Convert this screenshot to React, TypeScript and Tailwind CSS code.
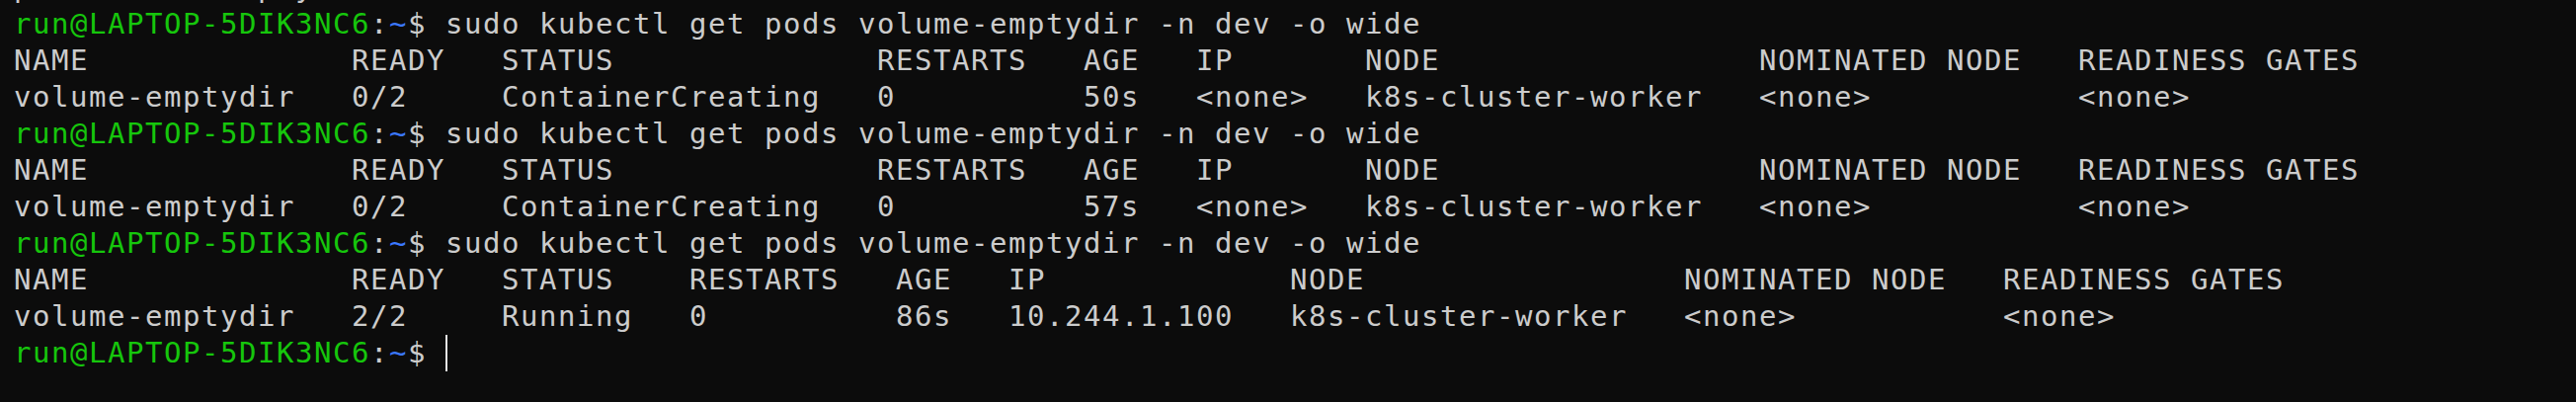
import React from "react";

type Cell = [string, number];
const row = (cells: Cell[]) => cells.map(([s, w]) => s.padEnd(w)).join("");

const header1 = row([
  ["NAME", 18],
  ["READY", 8],
  ["STATUS", 20],
  ["RESTARTS", 11],
  ["AGE", 6],
  ["IP", 9],
  ["NODE", 21],
  ["NOMINATED NODE", 17],
  ["READINESS GATES", 0],
]);
const data1 = (age: string) =>
  row([
    ["volume-emptydir", 18],
    ["0/2", 8],
    ["ContainerCreating", 20],
    ["0", 11],
    [age, 6],
    ["<none>", 9],
    ["k8s-cluster-worker", 21],
    ["<none>", 17],
    ["<none>", 0],
  ]);
const header2 = row([
  ["NAME", 18],
  ["READY", 8],
  ["STATUS", 10],
  ["RESTARTS", 11],
  ["AGE", 6],
  ["IP", 15],
  ["NODE", 21],
  ["NOMINATED NODE", 17],
  ["READINESS GATES", 0],
]);
const data2 = row([
  ["volume-emptydir", 18],
  ["2/2", 8],
  ["Running", 10],
  ["0", 11],
  ["86s", 6],
  ["10.244.1.100", 15],
  ["k8s-cluster-worker", 21],
  ["<none>", 17],
  ["<none>", 0],
]);

const CMD = "sudo kubectl get pods volume-emptydir -n dev -o wide";

function Prompt({ cmd, cursor }: { cmd?: string; cursor?: boolean }) {
  return (
    <div className="flex items-stretch h-[37px]">
      <span className="text-[#16c60c]">run@LAPTOP-5DIK3NC6</span>
      <span>:</span>
      <span className="text-[#3b78ff]">~</span>
      <span>{"$ "}</span>
      {cmd ? <span>{cmd}</span> : null}
      {cursor ? <span className="w-[2px] bg-[#e6e6e6] h-[37px]" /> : null}
    </div>
  );
}

function Line({ text }: { text: string }) {
  return <div className="h-[37px]">{text}</div>;
}

export default function App() {
  return (
    <div className="w-[2608px] h-[407px] overflow-hidden bg-[#0c0c0c]">
      <div className="mt-[-31px] pl-[14px] text-[#cccccc] font-['DejaVu_Sans_Mono',monospace] text-[29px] leading-[37px] tracking-[1.54px] whitespace-pre">
        <Line text="pod/volume-emptydir created" />
        <Prompt cmd={CMD} />
        <Line text={header1} />
        <Line text={data1("50s")} />
        <Prompt cmd={CMD} />
        <Line text={header1} />
        <Line text={data1("57s")} />
        <Prompt cmd={CMD} />
        <Line text={header2} />
        <Line text={data2} />
        <Prompt cursor />
      </div>
    </div>
  );
}
